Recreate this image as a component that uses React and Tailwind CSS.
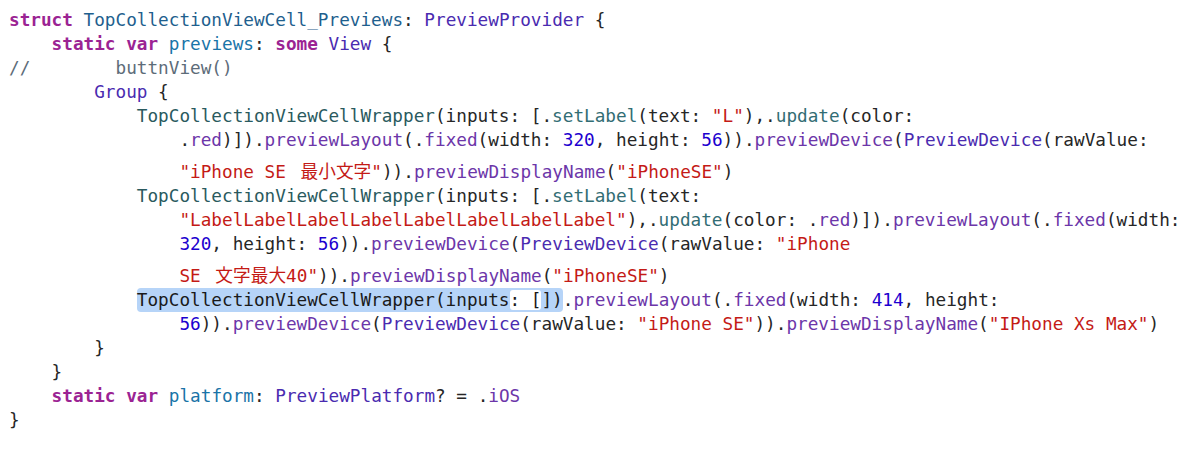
import React from "react";

const K = ({ children }) => <span className="text-[#9b2393] font-bold">{children}</span>;
const T = ({ children }) => <span className="text-[#1f5f8e]">{children}</span>;
const D = ({ children }) => <span className="text-[#1a74a8]">{children}</span>;
const S = ({ children }) => <span className="text-[#4a2bb0]">{children}</span>;
const F = ({ children }) => <span className="text-[#6c36a9]">{children}</span>;
const P = ({ children }) => <span className="text-[#2a5a5e]">{children}</span>;
const PF = ({ children }) => <span className="text-[#326d74]">{children}</span>;
const Str = ({ children }) => <span className="text-[#c41a16]">{children}</span>;
const N = ({ children }) => <span className="text-[#1c00cf]">{children}</span>;
const C = ({ children }) => <span className="text-[#5d6c79]">{children}</span>;
const J = ({ children }) => <span className="ml-[4px]">{children}</span>;

const Line = ({ children }) => <div className="h-[24px] leading-[24px] whitespace-pre">{children}</div>;
const TallLine = ({ children }) => (
  <div className="h-[32px] pt-[8px] leading-[24px] whitespace-pre">{children}</div>
);

export default function App() {
  return (
    <div
      className="w-[1200px] h-[457px] bg-white overflow-hidden pl-[9px] pt-[8px] text-[17.7px] text-[#262626]"
      style={{ fontFamily: '"DejaVu Sans Mono", "Noto Sans CJK JP", monospace' }}
    >
      <Line>
        <K>struct</K> <T>TopCollectionViewCell_Previews</T>: <S>PreviewProvider</S> {"{"}
      </Line>
      <Line>
        {"    "}<K>static</K> <K>var</K> <D>previews</D>: <K>some</K> <S>View</S> {"{"}
      </Line>
      <Line>
        <C>{"//        buttnView()"}</C>
      </Line>
      <Line>
        {"        "}<S>Group</S> {"{"}
      </Line>
      <Line>
        {"            "}<P>TopCollectionViewCellWrapper</P>(inputs: [.<PF>setLabel</PF>(text: <Str>"L"</Str>),.<PF>update</PF>(color:
      </Line>
      <Line>
        {"                "}.<F>red</F>)]).<F>previewLayout</F>(.<F>fixed</F>(width: <N>320</N>, height: <N>56</N>)).<F>previewDevice</F>(<S>PreviewDevice</S>(rawValue:
      </Line>
      <TallLine>
        {"                "}<Str>"iPhone SE <J>最小文字</J>"</Str>)).<F>previewDisplayName</F>(<Str>"iPhoneSE"</Str>)
      </TallLine>
      <Line>
        {"            "}<P>TopCollectionViewCellWrapper</P>(inputs: [.<PF>setLabel</PF>(text:
      </Line>
      <Line>
        {"                "}<Str>"LabelLabelLabelLabelLabelLabelLabelLabel"</Str>),.<PF>update</PF>(color: .<F>red</F>)]).<F>previewLayout</F>(.<F>fixed</F>(width:
      </Line>
      <Line>
        {"                "}<N>320</N>, height: <N>56</N>)).<F>previewDevice</F>(<S>PreviewDevice</S>(rawValue: <Str>"iPhone</Str>
      </Line>
      <TallLine>
        {"                "}<Str>SE <J>文字最大40</J>"</Str>)).<F>previewDisplayName</F>(<Str>"iPhoneSE"</Str>)
      </TallLine>
      <Line>
        {"            "}
        <span className="inline-block h-[24px] leading-[24px] bg-[#b6d4f8] rounded-[4px] text-[#1a1a1a]">
          TopCollectionViewCellWrapper(inputs
          <span className="inline-block h-[20px] leading-[20px] bg-white rounded-[3px]">: [</span>
          ])
        </span>
        .<F>previewLayout</F>(.<F>fixed</F>(width: <N>414</N>, height:
      </Line>
      <Line>
        {"                "}<N>56</N>)).<F>previewDevice</F>(<S>PreviewDevice</S>(rawValue: <Str>"iPhone SE"</Str>)).<F>previewDisplayName</F>(<Str>"IPhone Xs Max"</Str>)
      </Line>
      <Line>{"        }"}</Line>
      <Line>{"    }"}</Line>
      <Line>
        {"    "}<K>static</K> <K>var</K> <D>platform</D>: <S>PreviewPlatform</S>? = .<F>iOS</F>
      </Line>
      <Line>{"}"}</Line>
    </div>
  );
}
